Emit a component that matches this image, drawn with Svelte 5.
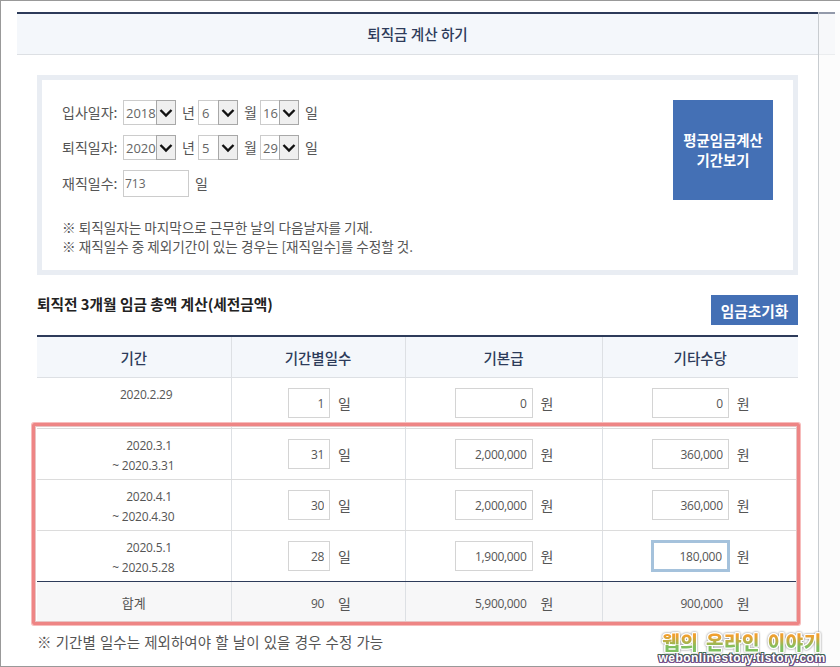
<script>
  const hiredRows = [
    { label: '입사일자:', year: '2018', month: '6', day: '16' },
    { label: '퇴직일자:', year: '2020', month: '5', day: '29' }
  ];

  const rows = [
    { lines: ['\u00a0\u00a02020.2.29'], days: '1', base: '0', extra: '0' },
    { lines: ['\u00a0\u00a0\u00a0\u00a02020.3.1', '~ 2020.3.31'], days: '31', base: '2,000,000', extra: '360,000' },
    { lines: ['\u00a0\u00a0\u00a0\u00a02020.4.1', '~ 2020.4.30'], days: '30', base: '2,000,000', extra: '360,000' },
    { lines: ['\u00a0\u00a0\u00a0\u00a02020.5.1', '~ 2020.5.28'], days: '28', base: '1,900,000', extra: '180,000', focus: true }
  ];
</script>

{#snippet select(value, cls)}
  <div class="sel {cls}">
    <span class="sel-val">{value}</span>
    <span class="sel-btn">
      <svg width="14" height="10" viewBox="0 0 14 10"><path d="M1.5 2 L7 7.5 L12.5 2" fill="none" stroke="#111" stroke-width="2.4" /></svg>
    </span>
  </div>
{/snippet}

<div class="page">
  <div class="title-bar">퇴직금 계산 하기</div>

  <div class="content">
    <div class="date-box">
      <div class="date-form">
        {#each hiredRows as r}
          <div class="date-row">
            <span class="lbl">{r.label}</span>
            {@render select(r.year, 'w-year')}
            <span class="unit">년</span>
            {@render select(r.month, 'w-month')}
            <span class="unit">월</span>
            {@render select(r.day, 'w-day')}
            <span class="unit">일</span>
          </div>
        {/each}
        <div class="date-row tall">
          <span class="lbl">재직일수:</span>
          <input class="work-days" value="713" />
          <span class="unit">일</span>
        </div>
        <p class="notes">
          ※ 퇴직일자는 마지막으로 근무한 날의 다음날자를 기재.<br />
          ※ 재직일수 중 제외기간이 있는 경우는 [재직일수]를 수정할 것.
        </p>
      </div>
      <button class="period-btn">평균임금계산<br />기간보기</button>
    </div>

    <div class="section-head">
      <h2>퇴직전 3개월 임금 총액 계산(세전금액)</h2>
      <button class="reset-btn">임금초기화</button>
    </div>

    <div class="table-wrap">
      <table>
        <colgroup>
          <col style="width: 194px" />
          <col style="width: 174px" />
          <col style="width: 197px" />
          <col style="width: 196px" />
        </colgroup>
        <thead>
          <tr>
            <th>기간</th>
            <th>기간별일수</th>
            <th>기본급</th>
            <th>기타수당</th>
          </tr>
        </thead>
        <tbody>
          {#each rows as row}
            <tr>
              <td class="period">
                {#each row.lines as line}
                  <span class="line">{line}</span>
                {/each}
              </td>
              <td class="days-cell"><input class="num w-days" value={row.days} /><span class="cell-unit">일</span></td>
              <td><input class="num w-base" value={row.base} /><span class="cell-unit">원</span></td>
              <td><input class="num w-extra" class:focused={row.focus} value={row.extra} /><span class="cell-unit">원</span></td>
            </tr>
          {/each}
        </tbody>
        <tfoot>
          <tr>
            <td class="sum-label">합계</td>
            <td class="days-cell"><span class="sum w-days">90</span><span class="cell-unit">일</span></td>
            <td><span class="sum w-base">5,900,000</span><span class="cell-unit">원</span></td>
            <td><span class="sum w-extra">900,000</span><span class="cell-unit">원</span></td>
          </tr>
        </tfoot>
      </table>
      <div class="highlight"></div>
    </div>

    <p class="foot-note">※ 기간별 일수는 제외하여야 할 날이 있을 경우 수정 가능</p>
  </div>

  <div class="scroll-line"></div>
  <div class="watermark">
    <div class="wm-title">웹의 온라인 이야기</div>
    <div class="wm-url">webonlinestory.tistory.com</div>
  </div>
</div>

<style>
  :global(body) {
    background: #fff;
  }

  .page {
    position: relative;
    width: 840px;
    height: 667px;
    box-sizing: border-box;
    padding-top: 11px;
    border-top: 1px solid #999;
    border-left: 1px solid #999;
    border-bottom: 1px solid #999;
    overflow: hidden;
    font-family: "Noto Sans CJK KR", "Noto Sans", sans-serif;
    font-size: 14px;
    color: #555;
  }

  .title-bar {
    margin: 0 5px 0 16px;
    padding-right: 17px;
    height: 40px;
    line-height: 39px;
    text-align: center;
    font-size: 14.6px;
    font-weight: 500;
    color: #2d3b5a;
    background: #f4f7fb;
    border-top: 2px solid #2d3b5a;
    border-bottom: 1px solid #dde0e4;
  }

  .content {
    margin: 20px 0 0 36px;
    width: 761px;
  }

  .date-box {
    display: flex;
    justify-content: space-between;
    box-sizing: border-box;
    height: 200px;
    padding: 20px 20px 0 20px;
    border: 5px solid #e9edf3;
  }

  .date-form {
    display: flex;
    flex-direction: column;
    gap: 10px;
  }

  .date-row {
    display: flex;
    align-items: center;
    height: 25px;
  }

  .date-row.tall {
    height: 27px;
  }

  .lbl {
    width: 61px;
    margin-top: -2px;
  }

  .sel {
    display: flex;
    box-sizing: border-box;
    height: 25px;
    border: 1px solid #ccc;
    font-size: 13px;
    font-family: "Open Sans", sans-serif;
    color: #666;
  }

  .sel-val {
    flex: 1;
    padding-left: 2px;
    line-height: 24px;
  }

  .sel-btn {
    display: flex;
    align-items: center;
    justify-content: center;
    box-sizing: border-box;
    width: 20px;
    margin: -1px -1px -1px 0;
    background: #efefef;
    border: 1px solid #a8a8a8;
  }

  .w-year { width: 53px; }
  .w-month { width: 40px; }
  .w-day { width: 39px; }

  .w-month .sel-val { padding-left: 3px; }

  .unit {
    width: 16px;
    padding-left: 6px;
    margin-top: -2px;
  }

  .work-days {
    box-sizing: border-box;
    width: 66px;
    height: 27px;
    padding: 0 1px;
    border: 1px solid #ccc;
    outline: none;
    font-family: "Open Sans", sans-serif;
    font-size: 12px;
    color: #666;
  }

  .notes {
    margin: 11px 0 0;
    line-height: 19px;
    font-size: 13.6px;
  }

  .period-btn {
    flex: none;
    width: 100px;
    height: 100px;
    padding: 0;
    border: none;
    background: #4470b5;
    color: #fff;
    font-family: inherit;
    font-size: 14.4px;
    font-weight: 700;
    line-height: 20px;
  }

  .section-head {
    display: flex;
    justify-content: space-between;
    align-items: flex-start;
    margin-top: 20px;
    height: 30px;
  }

  h2 {
    margin: -1px 0 0;
    font-size: 14.7px;
    line-height: 20px;
    font-weight: 700;
    color: #222;
  }

  .reset-btn {
    width: 87px;
    height: 30px;
    padding: 0;
    border: none;
    background: #4470b5;
    color: #fff;
    font-family: inherit;
    font-size: 14.7px;
    font-weight: 700;
  }

  .table-wrap {
    position: relative;
    margin-top: 10px;
  }

  table {
    width: 761px;
    table-layout: fixed;
    border-collapse: collapse;
  }

  th {
    height: 40px;
    padding: 0;
    font-size: 14.5px;
    font-weight: 500;
    color: #2d3b5a;
    background: #f4f7fb;
    border-top: 2px solid #2d3b5a;
    border-bottom: 1px solid #dde0e4;
    border-left: 1px solid #dde0e4;
  }

  th:first-child,
  td:first-child {
    border-left: none;
  }

  td {
    height: 50px;
    padding: 0;
    text-align: center;
    border-bottom: 1px solid #dcdcdc;
    border-left: 1px solid #dde0e4;
  }

  .days-cell {
    padding-left: 2px;
  }

  tbody tr:last-child td {
    border-bottom: 1px solid #2d3b5a;
  }

  tfoot td {
    height: 40px;
    background: #f7f7f8;
  }

  .period {
    vertical-align: top;
    padding: 7px 0 0 19px;
    box-sizing: border-box;
    font-family: "Open Sans", sans-serif;
    font-size: 12px;
    letter-spacing: -0.2px;
  }

  .line {
    display: block;
    line-height: 20px;
    white-space: pre;
  }

  .num {
    box-sizing: border-box;
    height: 30px;
    padding: 0 5px 0 0;
    text-align: right;
    border: 1px solid #d4d4d4;
    outline: none;
    vertical-align: middle;
    font-family: "Open Sans", sans-serif;
    font-size: 12px;
    letter-spacing: -0.3px;
    color: #555;
    background: #fff;
  }

  .num.focused {
    border: 2px solid #a5c2dc;
    outline: 1px solid #a5c2dc;
  }

  .w-days { width: 42px; }
  .w-base { width: 78px; }
  .w-extra { width: 77px; }

  .sum {
    display: inline-block;
    box-sizing: border-box;
    padding-right: 6px;
    text-align: right;
    vertical-align: middle;
    font-family: "Open Sans", sans-serif;
    font-size: 12px;
    letter-spacing: -0.3px;
  }

  .cell-unit {
    display: inline-block;
    width: 12px;
    margin-left: 8px;
    vertical-align: middle;
    text-align: left;
  }

  .sum-label {
    font-size: 13px;
  }

  .highlight {
    position: absolute;
    top: 88px;
    left: -5px;
    width: 768px;
    height: 202px;
    box-sizing: border-box;
    border: 3px solid #ee8585;
    box-shadow: 0 0 0 1px #f7bcbc, inset 0 0 0 1px #e8c4c4;
    border-radius: 2px;
    pointer-events: none;
  }

  .foot-note {
    margin: 9px 0 0;
    line-height: 20px;
    font-size: 14.5px;
    word-spacing: 1px;
  }

  .scroll-line {
    position: absolute;
    top: 11px;
    bottom: 0;
    left: 817px;
    width: 22px;
    border-left: 1px solid #c8ccd0;
    background: rgba(250, 250, 250, 0.5);
  }

  .watermark {
    position: absolute;
    left: 655px;
    bottom: 2px;
    width: 172px;
    text-align: center;
    font-weight: 900;
  }

  .wm-title {
    font-size: 19px;
    line-height: 20px;
    letter-spacing: 0.5px;
    word-spacing: 3px;
    background: linear-gradient(#f0a030 20%, #7fc060 75%);
    -webkit-background-clip: text;
    background-clip: text;
    color: transparent;
    filter: drop-shadow(1px 0 0 #fff) drop-shadow(-1px 0 0 #fff) drop-shadow(0 1px 0 #fff) drop-shadow(0 -1px 0 #fff) drop-shadow(0 0 1px #888);
  }

  .wm-url {
    font-family: "Liberation Sans", sans-serif;
    font-size: 12px;
    line-height: 12px;
    letter-spacing: 0.5px;
    color: #fff;
    text-shadow: 1px 0 0 #5a4a70, -1px 0 0 #5a4a70, 0 1px 0 #7a4f90, 0 -1px 0 #3f6a50, 1px 1px 0 #7a4f90, -1px -1px 0 #3f6a50, 1px -1px 0 #3f6a50, -1px 1px 0 #7a4f90;
  }
</style>
